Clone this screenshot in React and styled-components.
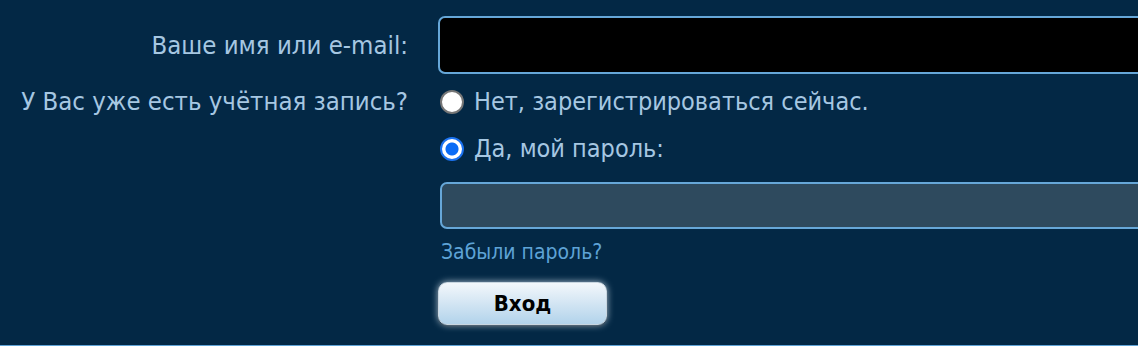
import React, { useState } from 'react'
import styled, { createGlobalStyle } from 'styled-components'

const GlobalStyle = createGlobalStyle`
  html, body {
    margin: 0;
    padding: 0;
    background: #032845;
    overflow: hidden;
  }
  body {
    font-family: "DejaVu Sans Condensed", "DejaVu Sans", sans-serif;
    font-stretch: condensed;
  }
`

const Form = styled.form`
  display: grid;
  grid-template-columns: 408px 760px;
  align-content: start;
  column-gap: 30px;
  row-gap: 4px;
  padding-top: 16px;
  height: 346px;
  box-sizing: border-box;
  border-bottom: 1px solid #5fa3d6;
  background: #032845;
`

const Label = styled.div`
  text-align: right;
  color: #a6c7e2;
  font-size: 25.5px;
  line-height: ${p => p.lh || '58px'};
  white-space: nowrap;
`

const Controls = styled.div`
  display: flex;
  flex-direction: column;
`

const TextInput = styled.input`
  box-sizing: border-box;
  width: 100%;
  height: ${p => p.h || '58px'};
  margin-left: ${p => p.offset || '0px'};
  margin-top: ${p => p.mt || '0px'};
  background: ${p => p.bg || '#000'};
  border: 2px solid #66a7d8;
  border-radius: 7px;
  outline: none;
  color: #fff;
  font-family: inherit;
  font-size: 22px;
  padding: 0 12px;
`

const RadioRow = styled.label`
  display: flex;
  align-items: center;
  gap: 10px;
  height: 47px;
  margin-left: 2px;
  color: #a6c7e2;
  font-size: 25px;
  cursor: pointer;
`

const Radio = styled.input`
  appearance: none;
  margin: 0;
  width: 24px;
  height: 24px;
  border-radius: 50%;
  box-sizing: border-box;
  background: #fff;
  border: 2px solid #767676;
  flex-shrink: 0;
  &:checked {
    border: 2px solid #1b72f0;
    background: radial-gradient(circle, #0b6cf6 0 6px, #fff 7px);
  }
`

const ForgotLink = styled.a`
  display: block;
  margin: 12px 0 0 3px;
  color: #5ea3d6;
  font-size: 21px;
  text-decoration: none;
  line-height: 22px;
`

const SubmitButton = styled.button`
  margin-top: 19px;
  width: 169px;
  height: 43px;
  border-radius: 9px;
  border: 1px solid #c9d6e0;
  background: linear-gradient(#f3f7fb, #b2d3eb);
  box-shadow: 0 0 7px rgba(230, 240, 250, 0.75), 0 2px 2px rgba(0, 0, 0, 0.3);
  font-family: inherit;
  font-size: 22px;
  font-weight: bold;
  color: #000;
  cursor: pointer;
`

export default function App() {
  const [hasAccount, setHasAccount] = useState(true)
  return (
    <>
      <GlobalStyle />
      <Form onSubmit={e => e.preventDefault()}>
        <Label>Ваше имя или e-mail:</Label>
        <Controls>
          <TextInput type="text" />
        </Controls>

        <Label lh="47px">У Вас уже есть учётная запись?</Label>
        <Controls>
          <RadioRow>
            <Radio type="radio" name="reg" checked={!hasAccount} onChange={() => setHasAccount(false)} />
            Нет, зарегистрироваться сейчас.
          </RadioRow>
          <RadioRow>
            <Radio type="radio" name="reg" checked={hasAccount} onChange={() => setHasAccount(true)} />
            Да, мой пароль:
          </RadioRow>
          <TextInput type="password" h="47px" offset="2px" mt="10px" bg="#2e4a5e" />
          <ForgotLink href="#">Забыли пароль?</ForgotLink>
          <SubmitButton type="submit">Вход</SubmitButton>
        </Controls>
      </Form>
    </>
  )
}
